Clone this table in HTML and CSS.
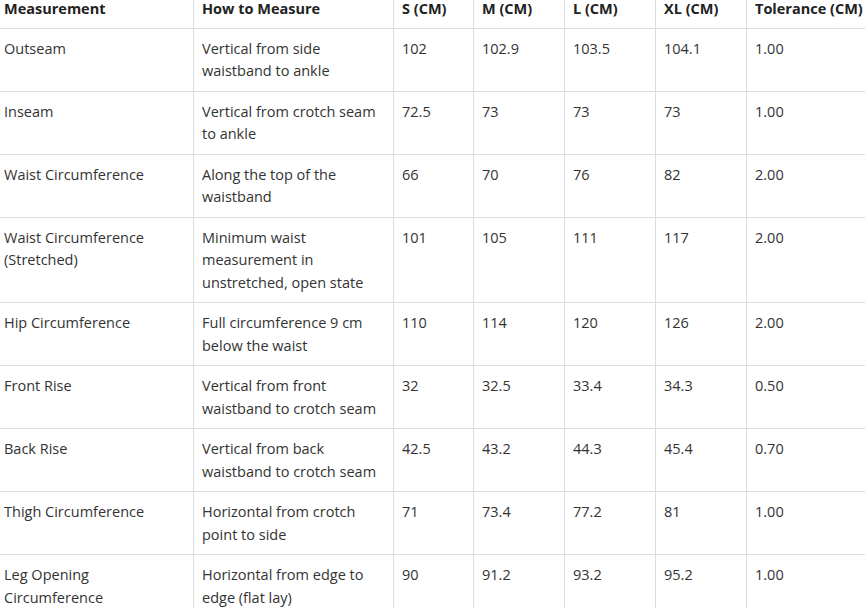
FILE: index.html
```html
<!DOCTYPE html>
<html lang="en">
<head>
<meta charset="utf-8">
<title>Size Chart</title>
<link rel="stylesheet" href="styles.css">
</head>
<body>
<table class="size-table">
  <colgroup>
    <col class="c-name"><col class="c-how"><col class="c-s"><col class="c-m"><col class="c-l"><col class="c-xl"><col class="c-tol">
  </colgroup>
  <thead>
    <tr><th>Measurement</th><th>How to Measure</th><th>S (CM)</th><th>M (CM)</th><th>L (CM)</th><th>XL (CM)</th><th>Tolerance (CM)</th></tr>
  </thead>
  <tbody>
    <tr><td>Outseam</td><td>Vertical from side waistband to ankle</td><td>102</td><td>102.9</td><td>103.5</td><td>104.1</td><td>1.00</td></tr>
    <tr><td>Inseam</td><td>Vertical from crotch seam to ankle</td><td>72.5</td><td>73</td><td>73</td><td>73</td><td>1.00</td></tr>
    <tr><td>Waist Circumference</td><td>Along the top of the waistband</td><td>66</td><td>70</td><td>76</td><td>82</td><td>2.00</td></tr>
    <tr><td>Waist Circumference (Stretched)</td><td>Minimum waist measurement in unstretched, open state</td><td>101</td><td>105</td><td>111</td><td>117</td><td>2.00</td></tr>
    <tr><td>Hip Circumference</td><td>Full circumference 9 cm below the waist</td><td>110</td><td>114</td><td>120</td><td>126</td><td>2.00</td></tr>
    <tr><td>Front Rise</td><td>Vertical from front waistband to crotch seam</td><td>32</td><td>32.5</td><td>33.4</td><td>34.3</td><td>0.50</td></tr>
    <tr><td>Back Rise</td><td>Vertical from back waistband to crotch seam</td><td>42.5</td><td>43.2</td><td>44.3</td><td>45.4</td><td>0.70</td></tr>
    <tr><td>Thigh Circumference</td><td>Horizontal from crotch point to side</td><td>71</td><td>73.4</td><td>77.2</td><td>81</td><td>1.00</td></tr>
    <tr><td>Leg Opening Circumference</td><td>Horizontal from edge to edge (flat lay)</td><td>90</td><td>91.2</td><td>93.2</td><td>95.2</td><td>1.00</td></tr>
  </tbody>
</table>
</body>
</html>
```
FILE: styles.css
```css
html, body {
  margin: 0;
  padding: 0;
  background: #ffffff;
  overflow: hidden;
}
body {
  font-family: "Open Sans", "Noto Sans", sans-serif;
  font-size: 14.5px;
  color: #333333;
}
.size-table {
  border-collapse: collapse;
  table-layout: fixed;
  width: 881px;
  margin-left: -5px;
  margin-top: -10px;
}
.c-name { width: 198px; }
.c-how { width: 200px; }
.c-s { width: 80px; }
.c-m { width: 91px; }
.c-l { width: 91px; }
.c-xl { width: 91px; }
.c-tol { width: 130px; }
.size-table th,
.size-table td {
  border: 1px solid #dddddd;
  padding: 9px 8px 8px 8px;
  line-height: 22.5px;
  text-align: left;
  vertical-align: top;
  white-space: normal;
}
.size-table th {
  font-weight: 700;
  color: #222222;
  border-top: none;
  padding: 8px 8px 7px 8px;
}
```
